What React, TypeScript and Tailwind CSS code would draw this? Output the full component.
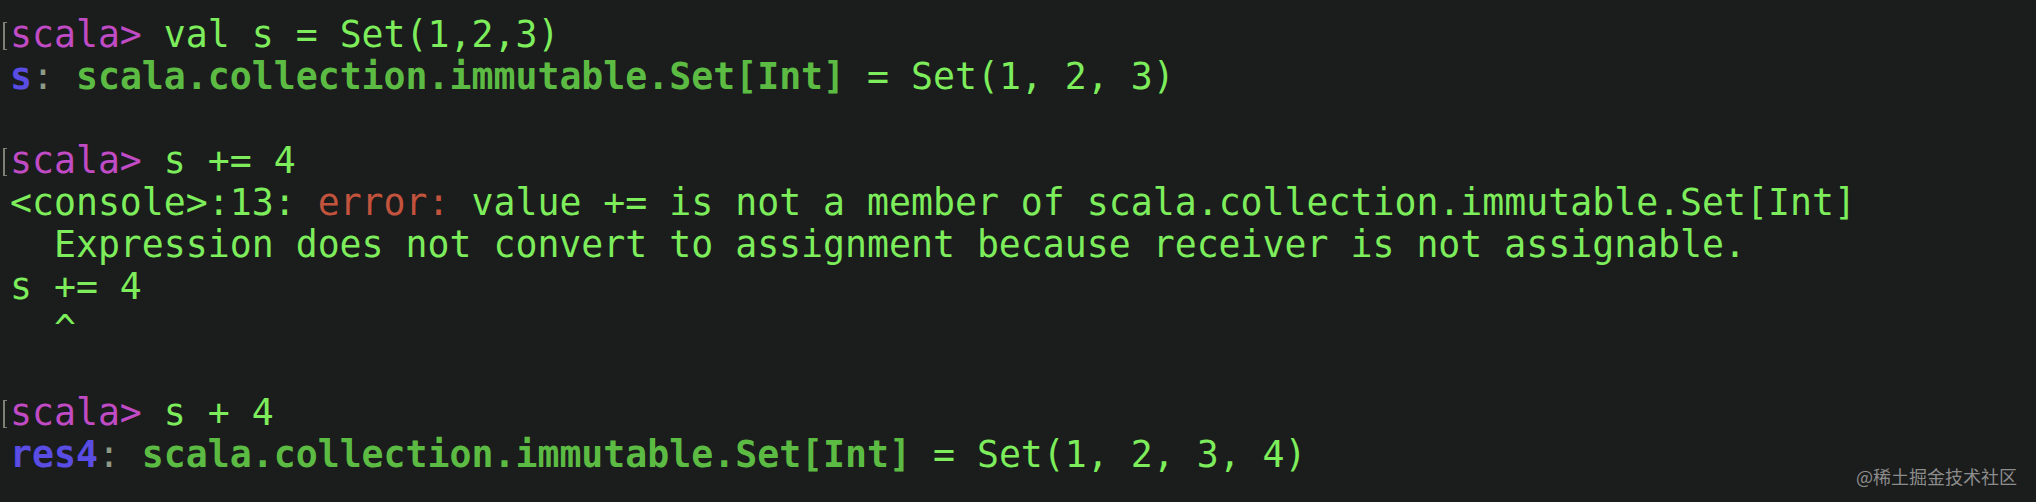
const GREEN = "text-[#7ded5b]";
const DARK = "text-[#5cbb43] font-bold";
const PROMPT = "text-[#c04bc4]";
const BLUE = "text-[#5a4de4] font-bold";
const DIM = "text-[#8d9b86]";
const RED = "text-[#c2533c]";

function Bracket() {
  return (
    <span className="mt-[8px] mr-[3px] h-[28px] w-[4px] shrink-0 border-y border-l-2 border-[#7d8074]" />
  );
}

function Line({ prompt, children }: { prompt?: boolean; children?: React.ReactNode }) {
  return (
    <div className="flex h-[42px] items-start">
      {prompt ? <Bracket /> : <span className="w-[7px] shrink-0" />}
      <span className="whitespace-pre">{children}</span>
    </div>
  );
}

function TypeSig({ name, value }: { name: string; value: string }) {
  return (
    <>
      <span className={BLUE}>{name}</span>
      <span className={DIM}>: </span>
      <span className={DARK}>scala.collection.immutable.Set[Int]</span>
      <span className={GREEN}> = {value}</span>
    </>
  );
}

export default function App() {
  return (
    <div
      className="relative h-[502px] w-full overflow-hidden bg-[#1b1c1c] pl-[3px] pt-[14px] text-[36.5px] leading-[42px]"
      style={{ fontFamily: '"DejaVu Sans Mono", "Liberation Mono", monospace' }}
    >
      <Line prompt>
        <span className={PROMPT}>scala&gt;</span>
        <span className={GREEN}> val s = Set(1,2,3)</span>
      </Line>
      <Line>
        <TypeSig name="s" value="Set(1, 2, 3)" />
      </Line>
      <Line />
      <Line prompt>
        <span className={PROMPT}>scala&gt;</span>
        <span className={GREEN}> s += 4</span>
      </Line>
      <Line>
        <span className={GREEN}>&lt;console&gt;:13: </span>
        <span className={RED}>error:</span>
        <span className={GREEN}> value += is not a member of scala.collection.immutable.Set[Int]</span>
      </Line>
      <Line>
        <span className={GREEN}>  Expression does not convert to assignment because receiver is not assignable.</span>
      </Line>
      <Line>
        <span className={GREEN}>s += 4</span>
      </Line>
      <Line>
        <span className={GREEN}>  ^</span>
      </Line>
      <Line />
      <Line prompt>
        <span className={PROMPT}>scala&gt;</span>
        <span className={GREEN}> s + 4</span>
      </Line>
      <Line>
        <TypeSig name="res4" value="Set(1, 2, 3, 4)" />
      </Line>

      {/* watermark */}
      <div
        className="absolute bottom-[17px] right-[19px] text-[18px] leading-none text-[#8c8c8c]"
        style={{ fontFamily: '"Noto Sans CJK SC", "Noto Sans", sans-serif' }}
      >
        @稀土掘金技术社区
      </div>
    </div>
  );
}
